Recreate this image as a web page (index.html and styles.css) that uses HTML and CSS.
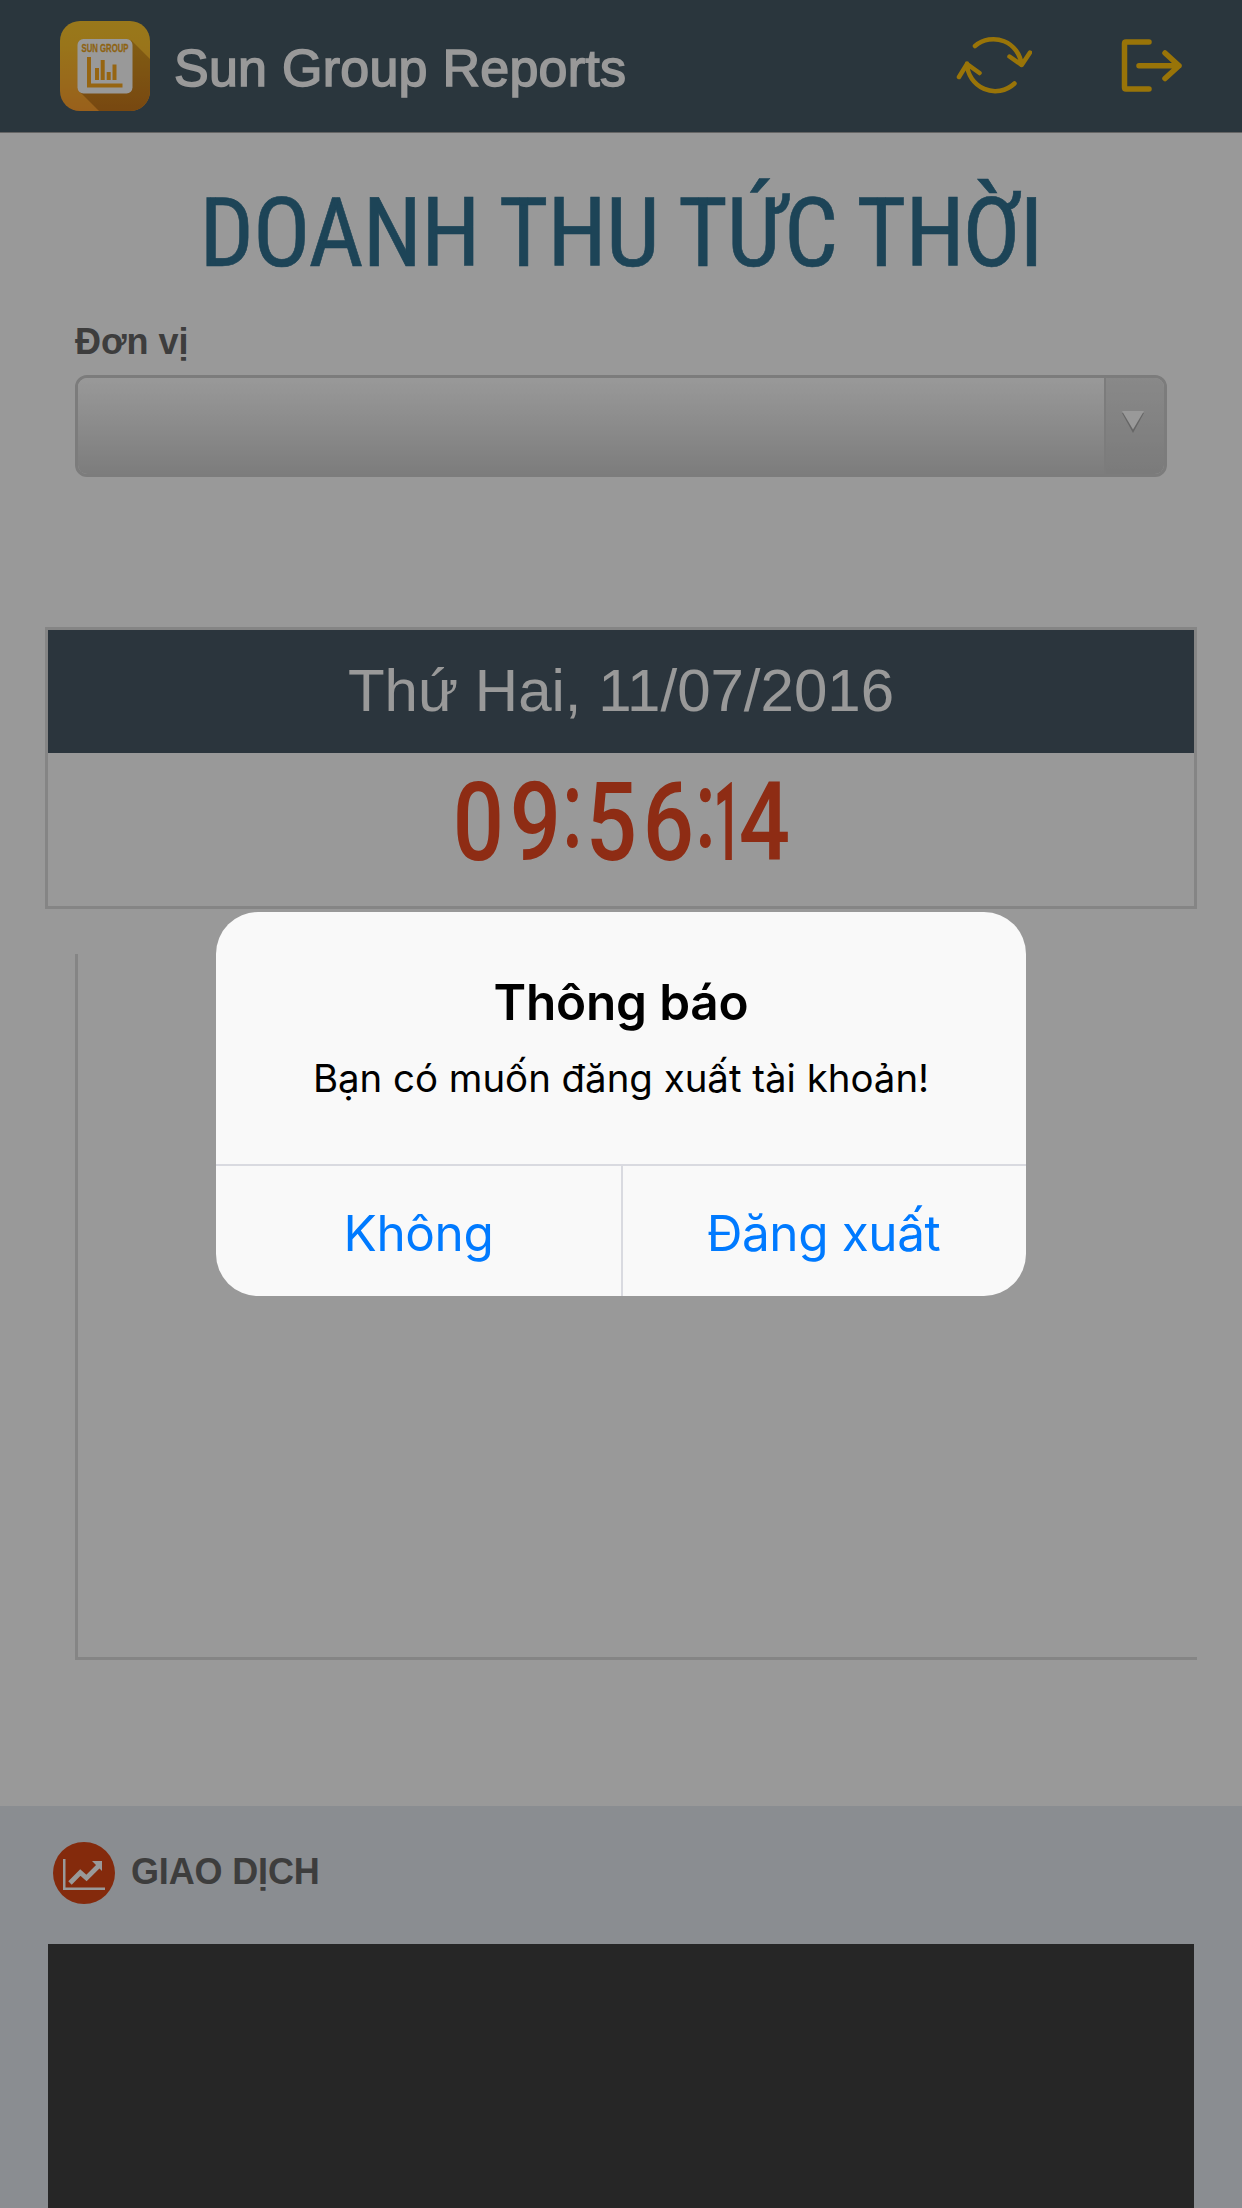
FILE: index.html
```html
<!DOCTYPE html>
<html lang="vi">
<head>
<meta charset="utf-8">
<title>Sun Group Reports</title>
<link rel="stylesheet" href="styles.css">
</head>
<body>
<div class="screen">
  <header class="topbar">
    <svg class="logo" viewBox="0 0 90 90">
      <defs>
        <linearGradient id="gold" x1="0" y1="0" x2="0" y2="1"><stop offset="0" stop-color="#ffc82d"/><stop offset=".25" stop-color="#ffc42c"/><stop offset="1" stop-color="#ffa02e"/></linearGradient>
        <linearGradient id="shade" x1="0" y1="0" x2="0" y2="1"><stop offset="0" stop-color="#d89b20"/><stop offset="1" stop-color="#c8781c"/></linearGradient>
        <clipPath id="tile"><rect width="90" height="90" rx="20"/></clipPath>
      </defs>
      <g clip-path="url(#tile)">
        <rect width="90" height="90" fill="url(#gold)"/>
        <path d="M71 19L90 38V90H39L20 71Z" fill="url(#shade)"/>
      </g>
      <rect x="17.500" y="18" width="55" height="54.500" rx="6" fill="#fff"/>
      <text x="21.500" y="30.500" class="logo-name" textLength="47" lengthAdjust="spacingAndGlyphs">SUN GROUP</text>
      <path d="M27 36h4v26.500h31.500v4H27zM35 47h4v12h-4zM40.700 39h4v20h-4zM46.700 51h4v8h-4zM52.500 43.500h4V59h-4z" fill="#fba91e"/>
    </svg>
    <h1 class="app-name">Sun Group Reports</h1>
    <svg class="icon refresh" viewBox="0 0 76 62" fill="none">
      <path d="M19 12A28.200 28.200 0 0 1 65.500 31M53.500 22.500L65.700 31L74 18.500M58.500 49.500A28.200 28.200 0 0 1 11 29.500M3 43L11 30L23.500 39"/>
    </svg>
    <svg class="icon logout" viewBox="0 0 62 55" fill="none">
      <path d="M29 4H6Q4.500 4 4.500 5.500V49.500Q4.500 51 6 51H29M19 27.700H59M45 15L59 27.700L45 40.500"/>
    </svg>
  </header>

  <section class="revenue">
    <h2 class="title">DOANH THU TỨC THỜI</h2>
    <label class="unit-label">Đơn vị</label>
    <div class="select">
      <div class="select-value"></div>
      <div class="select-button">
        <svg class="arrow" viewBox="0 0 22 22"><path d="M0 2H22L11 22Z" fill="#ababab"/><path d="M0 0H22L11 18.500Z" fill="#fff"/></svg>
      </div>
    </div>

    <div class="clock">
      <div class="date">Thứ Hai, 11/07/2016</div>
      <div class="time"><span>0</span><span>9</span><span class="colon">:</span><span>5</span><span>6</span><span class="colon">:</span><span class="one">1</span><span>4</span></div>
    </div>

    <div class="chart"></div>
  </section>

  <section class="deals">
    <div class="deals-head">
      <svg class="deals-icon" viewBox="0 0 62 62">
        <circle cx="31" cy="31" r="31" fill="#dc4615"/>
        <path d="M10 17h2.500v28.500H52V48H10z" fill="#fff"/>
        <path d="M17 41L27.300 30.500L33.500 36L45.500 24" fill="none" stroke="#fff" stroke-width="4.800"/>
        <path d="M39 19H49V29Z" fill="#fff"/>
      </svg>
      <h3 class="deals-title">GIAO DỊCH</h3>
    </div>
    <div class="deals-panel"></div>
  </section>
</div>

<div class="backdrop">
  <div class="alert">
    <div class="alert-body">
      <div class="alert-title">Thông báo</div>
      <div class="alert-text">Bạn có muốn đăng xuất tài khoản!</div>
    </div>
    <div class="alert-actions">
      <button class="action no">Không</button>
      <button class="action yes">Đăng xuất</button>
    </div>
  </div>
</div>
</body>
</html>
```
FILE: styles.css
```css
* { box-sizing: border-box; margin: 0; }

body {
  width: 1242px;
  height: 2208px;
  overflow: hidden;
  background: #fff;
  font-family: "Liberation Sans", sans-serif;
}

.screen {
  height: 2208px;
  display: flex;
  flex-direction: column;
}

.topbar {
  height: 133px;
  flex: none;
  display: flex;
  align-items: flex-start;
  padding-left: 60px;
  background: #465a66;
  border-bottom: 1px solid #a9a9a9;
}

.logo { width: 90px; height: 90px; margin-top: 21px; }

.logo-name {
  font: bold 11.500px "Liberation Sans Narrow", "Liberation Sans", sans-serif;
  fill: #eda51c;
  stroke: #eda51c;
  stroke-width: .3px;
}

.app-name {
  margin: 36px 0 0 24px;
  width: 782px;
  font-size: 52px;
  line-height: 64px;
  font-weight: normal;
  letter-spacing: .25px;
  color: #fff;
  -webkit-text-stroke: 1.500px #fff;
}

.icon { flex: none; stroke: #ffc20e; stroke-linecap: round; stroke-linejoin: round; }
.refresh { width: 76px; height: 62px; margin-top: 34px; stroke-width: 4.500; }
.logout { width: 62px; height: 55px; margin: 38px 0 0 88px; stroke-width: 5.500; }

.revenue {
  height: 1673px;
  flex: none;
  padding: 0 45px;
}

.title {
  margin-top: 44px;
  font: normal 95.500px/112px "Roboto Condensed", Roboto, sans-serif;
  letter-spacing: -.850px;
  text-align: center;
  white-space: nowrap;
  color: #317291;
  -webkit-text-stroke: .6px #317291;
}

.unit-label {
  display: block;
  margin: 32px 0 0 30px;
  font-size: 36px;
  line-height: 42px;
  font-weight: bold;
  color: #666;
}

.select {
  width: 1092px;
  height: 102px;
  margin: 12px 0 0 30px;
  display: flex;
  border: 3px solid #cfcfcf;
  border-radius: 12px;
  overflow: hidden;
}

.select-value { flex: 1; background: linear-gradient(#fff, #d0d0d0); }

.select-button {
  width: 60px;
  padding: 33px 0 0 16px;
  border-left: 2px solid #cfcfcf;
  background: linear-gradient(#e4e4e4, #cdcdcd);
}

.arrow { display: block; width: 22px; height: 22px; }

.clock {
  height: 282px;
  margin-top: 150px;
  border: 3px solid #dedede;
}

.date {
  height: 123px;
  font-size: 60px;
  line-height: 121px;
  text-align: center;
  color: #fff;
  background: #485966;
}

.time {
  display: flex;
  justify-content: center;
  font: 500 110px/140px Roboto, sans-serif;
  color: #ed4a22;
}

.time span { width: 57px; display: flex; justify-content: center; transform: scaleX(.82); }
.time .colon { width: 19px; transform: translate(-1px, -13px) scaleX(.72); }
.time .one { width: 20px; font-weight: 700; transform: translateX(1px) scaleX(.42); }

.chart {
  height: 706px;
  margin: 45px 0 0 30px;
  border-left: 3px solid #dedede;
  border-bottom: 3px solid #dedede;
}

.deals {
  flex: 1;
  padding: 0 48px;
  display: flex;
  flex-direction: column;
  background: #e6ebf2;
}

.deals-head {
  height: 138px;
  padding-left: 5px;
  display: flex;
  align-items: center;
  gap: 16px;
}

.deals-icon { width: 62px; height: 62px; margin-top: -4px; }
.deals-title { margin-top: -6px; font-size: 36px; line-height: 42px; letter-spacing: -.15px; color: #666; }
.deals-panel { flex: 1; background: #404040; }

.backdrop {
  position: absolute;
  inset: 0;
  display: flex;
  align-items: center;
  justify-content: center;
  background: rgba(0, 0, 0, .4);
  font-family: Inter, sans-serif;
}

.alert {
  width: 810px;
  height: 384px;
  display: flex;
  flex-direction: column;
  border-radius: 42px;
  background: #f9f9f9;
  overflow: hidden;
  color: #000;
}

.alert-body { height: 252px; padding-top: 60px; text-align: center; }
.alert-title { font-size: 49.500px; line-height: 60px; font-weight: 600; letter-spacing: -.2px; }
.alert-text { margin-top: 22px; font-size: 38.400px; line-height: 48px; white-space: nowrap; }

.alert-actions {
  flex: 1;
  display: grid;
  grid-template-columns: 407px 1fr;
  border-top: 2px solid #d9dae0;
}

.action {
  border: 0;
  padding: 4px 0 0;
  background: none;
  font: 49.500px/60px Inter, sans-serif;
  letter-spacing: -.4px;
  color: #007aff;
}

.no { border-right: 2px solid #d9dae0; }
.yes { padding-right: 2px; }
```
